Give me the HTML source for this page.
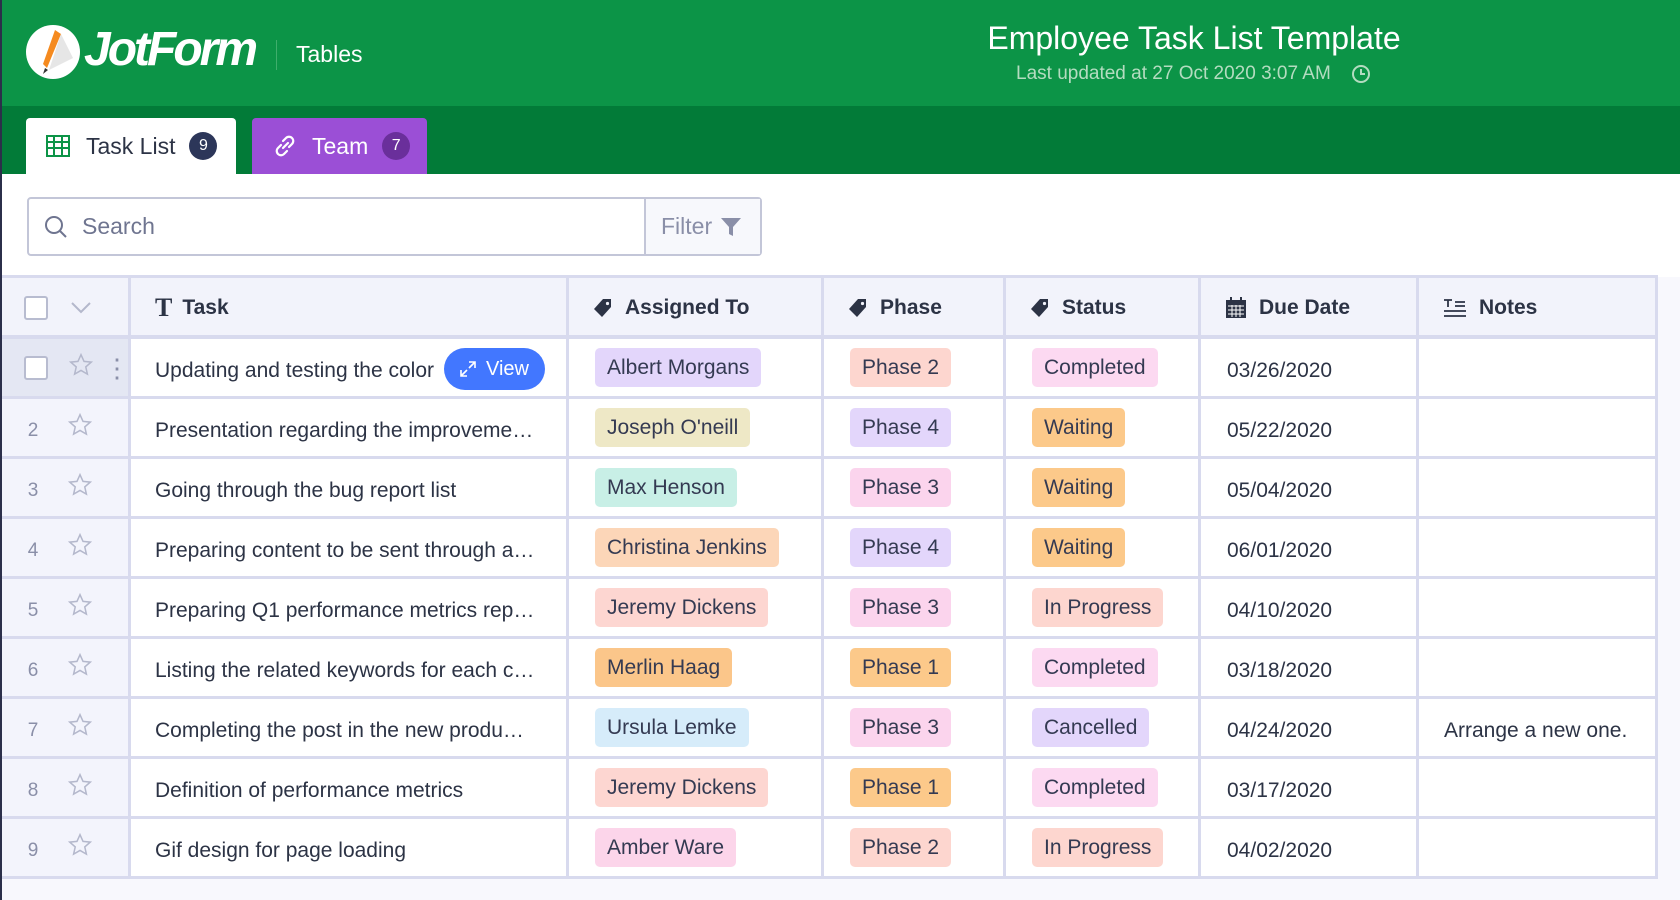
<!DOCTYPE html>
<html><head><meta charset="utf-8"><style>
*{box-sizing:border-box;margin:0;padding:0}
body{width:1680px;height:900px;overflow:hidden;background:#f8f8fd;font-family:"Liberation Sans",sans-serif;color:#2c3345;position:relative}
.abs{position:absolute}
.hdr{left:0;top:0;width:1680px;height:106px;background:#0c9447}
.tabbar{left:0;top:106px;width:1680px;height:68px;background:#027b38}
.lb{left:0;top:0;width:2px;height:900px;background:#2b2f4a;z-index:9}
.white{left:0;top:174px;width:1680px;height:103px;background:#fff}
.tab{top:118px;height:56px;border-radius:4px 4px 0 0;display:flex;align-items:center;font-size:23px}
.badge{width:28px;height:28px;border-radius:50%;color:#fff;font-size:16px;display:flex;align-items:center;justify-content:center;margin-left:14px}
.row{position:absolute;left:2px;width:1656px;height:60px;border-bottom:3px solid #d8daee}
.cell{position:absolute;top:0;height:100%;border-right:3px solid #d8daee;display:flex;align-items:center;font-size:21px;white-space:nowrap;overflow:hidden}
.pill{padding:0 12px;height:39px;line-height:39px;border-radius:5px;font-size:21px;color:#343a52}
.tx{padding-top:6px}
.num{color:#8a8fa8;font-size:19px}
.hd .cell{font-weight:bold;background:#f2f3fb}
</style></head><body>
<div class="abs lb"></div>
<div class="abs hdr"></div>
<div class="abs tabbar"></div>
<div class="abs white"></div>
<svg class="abs" style="left:25px;top:24px" width="56" height="56" viewBox="0 0 56 56"><circle cx="28" cy="28" r="27" fill="#fff"/><path d="M30 6 L18 40 L22 44 L36 10 Z" fill="#f58a1f"/><path d="M20 44 L18 50 L23 46Z" fill="#333"/><path d="M36 10 L48 34 L24 46 Z" fill="#e6e6e6"/></svg>
<div class="abs" style="left:84px;top:22px;font-size:48px;font-weight:bold;font-style:italic;color:#fff;letter-spacing:-3px">JotForm</div>
<div class="abs" style="left:276px;top:40px;width:1px;height:30px;background:#3fae6c"></div>
<div class="abs" style="left:296px;top:41px;font-size:23px;color:#fff">Tables</div>
<div class="abs" style="left:894px;top:20px;width:600px;text-align:center;font-size:32px;color:#fff">Employee Task List Template</div>
<div class="abs" style="left:1016px;top:63px;font-size:19px;color:#b4dcc0">Last updated at 27 Oct 2020 3:07 AM</div>
<svg class="abs" style="left:1351px;top:64px" width="20" height="20" viewBox="0 0 20 20"><circle cx="10" cy="10" r="8" fill="none" stroke="#b4dcc0" stroke-width="2"/><path d="M10 5v5h4" fill="none" stroke="#b4dcc0" stroke-width="2"/></svg>
<div class="abs tab" style="left:26px;width:210px;background:#fff;color:#2c3345;padding-left:20px">
<svg width="24" height="24" viewBox="0 0 24 24"><rect x="1" y="2" width="22" height="20" fill="none" stroke="#0c9447" stroke-width="2"/><path d="M1 8h22M1 14h22M8 2v20M16 2v20" stroke="#0c9447" stroke-width="2"/></svg>
<span style="margin-left:16px">Task List</span><span class="badge" style="background:#2c3659">9</span></div>
<div class="abs tab" style="left:252px;width:175px;background:#9b4fd6;color:#fff;padding-left:20px">
<svg width="26" height="26" viewBox="0 0 26 26"><path d="M11 15l5-5M9 12l-3 3a4 4 0 0 0 6 6l3-3M17 14l3-3a4 4 0 0 0-6-6l-3 3" fill="none" stroke="#fff" stroke-width="2.2" stroke-linecap="round"/></svg>
<span style="margin-left:14px">Team</span><span class="badge" style="background:#6a2f9b">7</span></div>
<div class="abs" style="left:27px;top:197px;width:735px;height:59px;border:2px solid #c3c6d8;border-radius:4px;background:#fff"></div>
<svg class="abs" style="left:43px;top:214px" width="26" height="26" viewBox="0 0 26 26"><circle cx="11" cy="11" r="8" fill="none" stroke="#6f7590" stroke-width="2"/><path d="M17 17l6 6" stroke="#6f7590" stroke-width="2"/></svg>
<div class="abs" style="left:82px;top:213px;font-size:23px;color:#6f7590">Search</div>
<div class="abs" style="left:644px;top:199px;width:116px;height:55px;border-left:2px solid #c3c6d8;background:#f7f8fc;display:flex;align-items:center;padding-left:15px;font-size:23px;color:#8a8fa8">Filter<svg style="margin-left:8px" width="22" height="22" viewBox="0 0 22 22"><path d="M1 2h20l-8 9v9l-4-2v-7z" fill="#8a8fa8"/></svg></div>
<div class="abs" style="left:2px;top:275px;width:1656px;height:3px;background:#d8daee"></div>
<div id="t"></div>
<script>
const cols=[[0,129],[129,438],[567,255],[822,182],[1004,195],[1199,218],[1417,239]];
const data=[
["Updating and testing the color","Albert Morgans","#e3d6fb","Phase 2","#fdd6cf","Completed","#fcd9f1","03/26/2020",""],
["Presentation regarding the improveme…","Joseph O'neill","#eee8c6","Phase 4","#e3d6fb","Waiting","#fcc98a","05/22/2020",""],
["Going through the bug report list","Max Henson","#c8efe6","Phase 3","#fbd4ed","Waiting","#fcc98a","05/04/2020",""],
["Preparing content to be sent through a…","Christina Jenkins","#fcd6b8","Phase 4","#e3d6fb","Waiting","#fcc98a","06/01/2020",""],
["Preparing Q1 performance metrics rep…","Jeremy Dickens","#fdd6d1","Phase 3","#fbd4ed","In Progress","#fdd6cf","04/10/2020",""],
["Listing the related keywords for each c…","Merlin Haag","#fbc68a","Phase 1","#fcc98a","Completed","#fcd9f1","03/18/2020",""],
["Completing the post in the new produ…","Ursula Lemke","#d6ecfa","Phase 3","#fbd4ed","Cancelled","#e3d6fb","04/24/2020","Arrange a new one."],
["Definition of performance metrics","Jeremy Dickens","#fdd6d1","Phase 1","#fcc98a","Completed","#fcd9f1","03/17/2020",""],
["Gif design for page loading","Amber Ware","#fcd5ea","Phase 2","#fdd6cf","In Progress","#fdd6cf","04/02/2020",""]];
const star='<svg width="26" height="26" viewBox="0 0 24 24"><path d="M12 2.5l2.8 6.2 6.7.6-5.1 4.5 1.5 6.6L12 17l-5.9 3.4 1.5-6.6-5.1-4.5 6.7-.6z" fill="none" stroke="#b4b8cc" stroke-width="1.4"/></svg>';
const tag='<svg width="20" height="20" viewBox="0 0 20 20" style="margin-right:12px"><path d="M10 1h8v8l-9 10-8-8z" fill="#2c3345"/><circle cx="14.5" cy="5.5" r="1.6" fill="#f2f3fb"/></svg>';
let h='<div class="row hd" style="top:278px;height:61px;border-bottom-width:4px">';
const hd=['',
'<span style="font-family:Liberation Serif,serif;font-size:26px;margin:0 10px 0 24px">T</span>Task',
'<span style="margin-left:24px"></span>'+tag+'Assigned To',
'<span style="margin-left:24px"></span>'+tag+'Phase',
'<span style="margin-left:24px"></span>'+tag+'Status',
'<svg width="22" height="22" viewBox="0 0 22 22" style="margin:0 12px 0 24px"><rect x="1" y="3" width="20" height="18" fill="#2c3345"/><path d="M6 0v5M16 0v5" stroke="#2c3345" stroke-width="2"/><path d="M3 9h16M3 13h16M3 17h16M7 8v12M11 8v12M15 8v12" stroke="#fff" stroke-width="1"/></svg>Due Date',
'<svg width="24" height="22" viewBox="0 0 24 22" style="margin:0 12px 0 24px"><path d="M1 3h8M5 3v7M12 5h10M12 9h10M1 14h22M1 19h22" stroke="#2c3345" stroke-width="1.8"/></svg>Notes'];
cols.forEach((c,i)=>{h+=`<div class="cell" style="left:${c[0]}px;width:${c[1]}px;padding-top:2px">${i==0?'<div style="margin-left:22px;width:24px;height:24px;border:2px solid #b8bcd0;border-radius:3px;background:#fff"></div><svg style="margin-left:22px" width="22" height="14" viewBox="0 0 22 14"><path d="M2 2l9 9 9-9" fill="none" stroke="#b4b8cc" stroke-width="2"/></svg>':hd[i]}</div>`});
h+='</div>';
data.forEach((d,r)=>{
 const top=339+r*60;
 h+=`<div class="row" style="top:${top}px;background:#fff">`;
 let g=r==0?`<div style="margin-left:22px;width:24px;height:24px;border:2px solid #b8bcd0;border-radius:3px;background:#fff"></div><span style="margin-left:20px">${star}</span><span style="margin-left:10px;color:#8a8fa8;font-size:26px;line-height:10px;width:6px">⋮</span>`
  :`<span class="num tx" style="width:62px;text-align:center">${r+1}</span><span style="margin-left:3px">${star}</span>`;
 h+=`<div class="cell" style="left:0;width:129px;background:${r==0?'#e4e7f3':'#f3f4fc'}">${g}</div>`;
 h+=`<div class="cell" style="left:129px;width:438px"><span class="tx" style="margin-left:24px">${d[0]}</span>${r==0?'<span style="position:absolute;left:313px;top:9px;width:101px;height:42px;border-radius:21px;background:#4277ff;color:#fff;display:flex;align-items:center;justify-content:center;font-size:20px"><svg width="16" height="16" viewBox="0 0 16 16" style="margin-right:10px"><path d="M9 1h6v6M15 1L9 7M7 15H1V9M1 15l6-6" fill="none" stroke="#fff" stroke-width="1.6"/></svg>View</span>':''}</div>`;
 h+=`<div class="cell" style="left:567px;width:255px"><span class="pill" style="margin-left:26px;background:${d[2]}">${d[1]}</span></div>`;
 h+=`<div class="cell" style="left:822px;width:182px"><span class="pill" style="margin-left:26px;background:${d[4]}">${d[3]}</span></div>`;
 h+=`<div class="cell" style="left:1004px;width:195px"><span class="pill" style="margin-left:26px;background:${d[6]}">${d[5]}</span></div>`;
 h+=`<div class="cell" style="left:1199px;width:218px"><span class="tx" style="margin-left:26px">${d[7]}</span></div>`;
 h+=`<div class="cell" style="left:1417px;width:239px"><span class="tx" style="margin-left:25px">${d[8]}</span></div>`;
 h+='</div>';
});
document.getElementById('t').innerHTML=h;
</script>
</body></html>
